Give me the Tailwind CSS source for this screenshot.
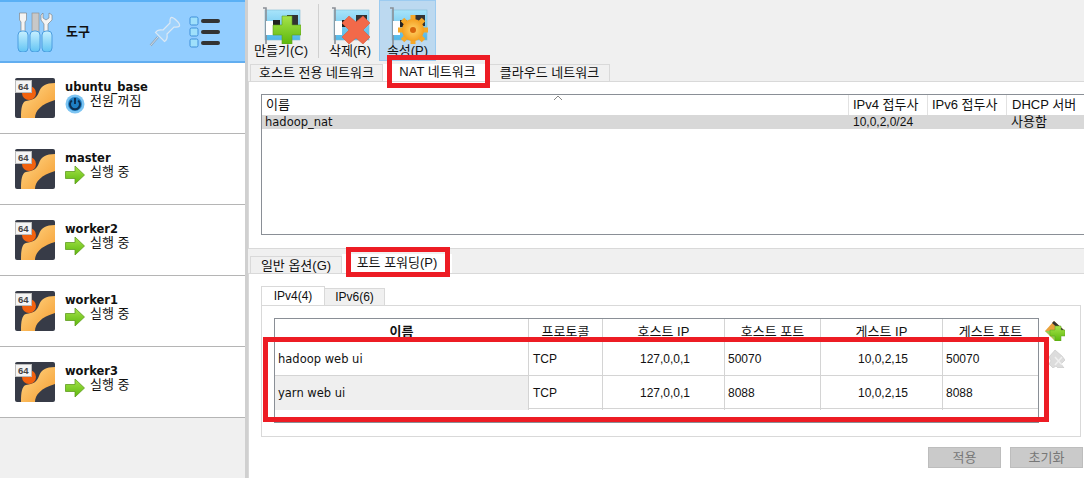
<!DOCTYPE html>
<html lang="ko">

<head>
  <meta charset="UTF-8">
  <meta name="viewport" content="width=device-width, initial-scale=1.0">
  <script src="https://cdn.jsdelivr.net/npm/@tailwindcss/browser@4"></script>
  <title>VirtualBox 네트워크 도구</title>
</head>

<body class="bg-white font-['Liberation_Sans','Noto_Sans_CJK_KR',sans-serif] text-[12px] text-[#111]">

  <!-- shared icons -->
  <svg class="absolute h-0 w-0" width="0" height="0">
    <defs>
      <linearGradient id="swoosh" x1="0" y1="0" x2="1" y2="1">
        <stop offset="0" stop-color="#ffd98a" />
        <stop offset="1" stop-color="#f59a2c" />
      </linearGradient>
      <linearGradient id="handle" x1="0" y1="0" x2="0" y2="1">
        <stop offset="0" stop-color="#c8f0ff" />
        <stop offset="1" stop-color="#62c4f4" />
      </linearGradient>
      <linearGradient id="card" x1="0" y1="0" x2="0" y2="1">
        <stop offset="0" stop-color="#a8e4fa" />
        <stop offset="1" stop-color="#4fb6e8" />
      </linearGradient>
      <linearGradient id="green" x1="0" y1="0" x2="0" y2="1">
        <stop offset="0" stop-color="#a6e34a" />
        <stop offset="1" stop-color="#5cb80c" />
      </linearGradient>
      <radialGradient id="gearfill">
        <stop offset="0" stop-color="#ffd36a" />
        <stop offset="1" stop-color="#f5a020" />
      </radialGradient>
      <symbol id="vm" viewBox="0 0 40 40">
        <rect width="40" height="40" rx="2" fill="#373b47" />
        <path d="M40 5C31 5 26 8 24 14C22 20 18 22 11 23C7 24 6 30 6 40L20 40C20 33 26 26 40 22Z" fill="url(#swoosh)" />
        <circle cx="14" cy="15" r="7" fill="#f2620f" />
        <rect x="0.5" y="2.5" width="16" height="12" fill="#f4f4f4" stroke="#bbb" />
        <text x="3" y="12" font-size="9.5" font-weight="700" fill="#444" font-family="Liberation Sans">64</text>
      </symbol>
      <symbol id="run" viewBox="0 0 20 20">
        <path d="M0.5 6.5H10V1L19.5 10L10 19V13.5H0.5Z" fill="url(#green)" stroke="#5f9c20" stroke-width="0.8" />
      </symbol>
      <symbol id="nic" viewBox="0 0 40 40">
        <rect x="4" y="6" width="35" height="30" fill="url(#card)" stroke="#7fbcd8" stroke-width="0.6" />
        <path d="M2 4H5V40" fill="none" stroke="#8a8f96" stroke-width="1.6" />
        <rect x="5" y="17" width="7" height="14" fill="#fff" />
        <rect x="12" y="16" width="7" height="7" fill="#222" />
        <rect x="26" y="11" width="11" height="11" fill="#333" />
      </symbol>
    </defs>
  </svg>

  <div class="relative flex h-[478px] w-[1084px] overflow-hidden">

    <!-- machine list -->
    <aside class="flex w-[248px] shrink-0 flex-col border-r-[3px] border-[#d0d0d0] bg-[#f0f0f0]">
      <div class="flex h-[63px] shrink-0 items-center border-t-2 border-b-2 border-t-[#5ab0f5] border-b-[#62aef0] bg-[#92cdff] pl-[17px]">
        <svg class="h-[40px] w-[36px]" viewBox="0 0 36 40">
          <path d="M2.5 1H9.5V8L8 10V20H4V10L2.5 8Z" fill="#f4f4f4" stroke="#777" stroke-width="0.6" />
          <rect x="15" y="1" width="7" height="20" fill="#c8c8c8" stroke="#888" stroke-width="0.6" />
          <path d="M26 1V6L29 8L32 6V1L35 3V8L31 12V21H27V12L24 8V3Z" fill="#f4f4f4" stroke="#777" stroke-width="0.6" />
          <rect x="1" y="19" width="10" height="21" rx="4" fill="url(#handle)" stroke="#4c9ee0" />
          <rect x="13" y="19" width="10" height="21" rx="4" fill="url(#handle)" stroke="#4c9ee0" />
          <rect x="25" y="19" width="10" height="21" rx="4" fill="url(#handle)" stroke="#4c9ee0" />
        </svg>
        <span class="ml-[13px] w-[26px] text-[13px] font-bold">도구</span>
        <svg class="ml-[57px] h-[32px] w-[32px]" viewBox="0 0 32 32" fill="none" stroke="#dbe8f4" stroke-width="1.2">
          <path d="M22 1.5C24 1 26 3 28 5C30 7 31 8.500 30.500 10C29 11.500 27 11 25 11L18 18C18.500 21 18 24 15.500 25.500L6.500 16.500C8 14 11 13.500 14 14L21 7C21 5 20.500 3 22 1.500Z" fill="#9fd2fc" />
          <path d="M9 21L1.500 29.500" stroke="#8fa7bd" stroke-width="2.400" />
          <path d="M9 21L1.500 29.500" stroke-width="0.800" />
        </svg>
        <svg class="ml-[8px] h-[32px] w-[32px]" viewBox="0 0 32 32">
          <rect x="1" y="1" width="8" height="8" rx="1.500" fill="#9fe0fb" stroke="#3f8fd8" />
          <rect x="1" y="12" width="8" height="8" rx="1.500" fill="#9fe0fb" stroke="#3f8fd8" />
          <rect x="1" y="23" width="8" height="8" rx="1.500" fill="#9fe0fb" stroke="#3f8fd8" />
          <rect x="12" y="3" width="19" height="4" rx="2" fill="#333" />
          <rect x="12" y="14" width="19" height="4" rx="2" fill="#333" />
          <rect x="12" y="25" width="19" height="4" rx="2" fill="#333" />
        </svg>
      </div>

      <div class="flex h-[71px] shrink-0 border-b border-[#b5b5b5] bg-white pl-[15px] pt-[15px]">
        <svg class="h-[40px] w-[40px]"><use href="#vm" /></svg>
        <div class="ml-[10px] pt-[2px]">
          <div class="h-[14px] font-['DejaVu_Sans','Noto_Sans_CJK_KR',sans-serif] text-[11.5px] font-bold leading-[14px]">ubuntu_base</div>
          <div class="flex items-start">
            <svg class="h-[20px] w-[20px]" viewBox="0 0 20 20">
              <circle cx="10" cy="10" r="9.500" fill="#7cc4f2" />
              <circle cx="10" cy="10" r="7" fill="#1f7fc4" />
              <path d="M6.800 6.500A5 5 0 1 0 13.200 6.500M10 4V10" fill="none" stroke="#0d2f52" stroke-width="2" />
            </svg>
            <span class="ml-[5px] text-[13px] leading-[14px]">전원 꺼짐</span>
          </div>
        </div>
      </div>
      <div class="flex h-[71px] shrink-0 border-b border-[#b5b5b5] bg-white pl-[15px] pt-[15px]">
        <svg class="h-[40px] w-[40px]"><use href="#vm" /></svg>
        <div class="ml-[10px] pt-[2px]">
          <div class="h-[14px] font-['DejaVu_Sans','Noto_Sans_CJK_KR',sans-serif] text-[11.5px] font-bold leading-[14px]">master</div>
          <div class="flex items-start">
            <svg class="h-[20px] w-[20px]"><use href="#run" /></svg>
            <span class="ml-[5px] text-[13px] leading-[14px]">실행 중</span>
          </div>
        </div>
      </div>
      <div class="flex h-[71px] shrink-0 border-b border-[#b5b5b5] bg-white pl-[15px] pt-[15px]">
        <svg class="h-[40px] w-[40px]"><use href="#vm" /></svg>
        <div class="ml-[10px] pt-[2px]">
          <div class="h-[14px] font-['DejaVu_Sans','Noto_Sans_CJK_KR',sans-serif] text-[11.5px] font-bold leading-[14px]">worker2</div>
          <div class="flex items-start">
            <svg class="h-[20px] w-[20px]"><use href="#run" /></svg>
            <span class="ml-[5px] text-[13px] leading-[14px]">실행 중</span>
          </div>
        </div>
      </div>
      <div class="flex h-[71px] shrink-0 border-b border-[#b5b5b5] bg-white pl-[15px] pt-[15px]">
        <svg class="h-[40px] w-[40px]"><use href="#vm" /></svg>
        <div class="ml-[10px] pt-[2px]">
          <div class="h-[14px] font-['DejaVu_Sans','Noto_Sans_CJK_KR',sans-serif] text-[11.5px] font-bold leading-[14px]">worker1</div>
          <div class="flex items-start">
            <svg class="h-[20px] w-[20px]"><use href="#run" /></svg>
            <span class="ml-[5px] text-[13px] leading-[14px]">실행 중</span>
          </div>
        </div>
      </div>
      <div class="flex h-[71px] shrink-0 border-b border-[#b5b5b5] bg-white pl-[15px] pt-[15px]">
        <svg class="h-[40px] w-[40px]"><use href="#vm" /></svg>
        <div class="ml-[10px] pt-[2px]">
          <div class="h-[14px] font-['DejaVu_Sans','Noto_Sans_CJK_KR',sans-serif] text-[11.5px] font-bold leading-[14px]">worker3</div>
          <div class="flex items-start">
            <svg class="h-[20px] w-[20px]"><use href="#run" /></svg>
            <span class="ml-[5px] text-[13px] leading-[14px]">실행 중</span>
          </div>
        </div>
      </div>
    </aside>

    <!-- network manager -->
    <main class="flex min-w-0 flex-1 flex-col bg-[#f0f0f0]">
      <div class="flex h-[62px] pl-[3px] text-[13px]">
        <div class="flex w-[60px] flex-col items-center pt-[4px]">
          <svg class="h-[40px] w-[40px]" viewBox="0 0 40 40">
            <use href="#nic" />
            <path d="M21 12H31V21H40V31H31V40H21V31H12V21H21Z" fill="url(#green)" stroke="#5f9c20" stroke-width="0.6" />
          </svg>
          <span class="leading-[14px]">만들기(C)</span>
        </div>
        <div class="ml-[7px] mr-[4px] mt-[4px] h-[54px] w-px bg-[#d0d0d0]"></div>
        <div class="flex w-[54px] flex-col items-center pt-[4px]">
          <svg class="h-[40px] w-[40px]" viewBox="0 0 40 40">
            <use href="#nic" />
            <path d="M19 12L26 18L33 12L40 19L33 26L40 33L33 40L26 34L19 40L12 33L19 26L12 19Z" fill="#f2694a" stroke="#d85a3a" stroke-width="0.6" />
          </svg>
          <span class="leading-[14px]">삭제(R)</span>
        </div>
        <div class="ml-[2px] flex h-[61px] w-[57px] flex-col items-center border border-[#9ccbf0] bg-[#bcd9f0] pt-[3px]">
          <svg class="h-[40px] w-[40px]" viewBox="0 0 40 40">
            <use href="#nic" />
            <path d="M25 11V41M10 26H40M14.5 15.5L35.5 36.5M35.5 15.5L14.5 36.5" stroke="#f5a828" stroke-width="5" />
            <circle cx="25" cy="26" r="11" fill="url(#gearfill)" />
            <circle cx="25" cy="26" r="3" fill="#d8660c" />
          </svg>
          <span class="leading-[14px]">속성(P)</span>
        </div>
      </div>

      <div class="mt-[2px] flex h-[17px] pl-[2px] text-[13px] leading-[16px]">
        <div class="w-[133px] border border-b-0 border-[#d9d9d9] text-center">호스트 전용 네트워크</div>
        <div class="w-[106px] bg-white pl-[3px] text-center">NAT 네트워크</div>
        <div class="w-[121px] border border-b-0 border-[#d9d9d9] text-center">클라우드 네트워크</div>
      </div>

      <section class="h-[168px] border-y border-l border-[#d9d9d9] bg-white pl-[12px] pt-[12px]">
        <div class="h-[141px] border border-r-0 border-[#8a8f96]">
          <div class="relative grid h-[20px] grid-cols-[587px_79px_79px_1fr] text-[13px] leading-[19px]">
            <div class="border-r border-[#e2e2e2] pl-[4px]">이름</div>
            <div class="border-r border-[#e2e2e2] pl-[4px]">IPv4 접두사</div>
            <div class="border-r border-[#e2e2e2] pl-[4px]">IPv6 접두사</div>
            <div class="pl-[5px]">DHCP 서버</div>
            <svg class="absolute left-[291px] top-0 h-[5px] w-[10px]" viewBox="0 0 10 5" fill="none" stroke="#888"><path d="M1 5L5 1L9 5" /></svg>
          </div>
          <div class="grid h-[14px] grid-cols-[587px_79px_79px_1fr] bg-[#d8d8d8] leading-[14px]">
            <div class="pl-[3px] font-['DejaVu_Sans',sans-serif] text-[11.5px]">hadoop_nat</div>
            <div class="pl-[4px]">10,0,2,0/24</div>
            <div></div>
            <div class="pl-[4px] text-[13px]">사용함</div>
          </div>
        </div>
      </section>

      <div class="flex h-[24px] items-end pl-[2px] text-[13px]">
        <div class="h-[17px] w-[92px] border border-b-0 border-[#d9d9d9] text-center leading-[17px]">일반 옵션(G)</div>
        <div class="h-[19px] w-[110px] bg-white text-center leading-[18px]">포트 포워딩(P)</div>
      </div>

      <section class="flex-1 border-t border-l border-[#d9d9d9] bg-white pl-[12px] pt-[12px]">
        <div class="flex h-[19px] items-end">
          <div class="h-[19px] w-[64px] border border-b-0 border-[#d9d9d9] text-center leading-[18px]">IPv4(4)</div>
          <div class="h-[17px] w-[60px] border-y border-r border-b-0 border-[#d9d9d9] bg-[#f0f0f0] text-center leading-[16px]">IPv6(6)</div>
        </div>
        <div class="flex h-[132px] w-[820px] border border-[#d9d9d9] pl-[12px] pt-[12px]">
          <div class="h-[105px] w-[765px] border border-[#8a8f96]">
            <div class="grid h-[23px] grid-cols-[254px_74px_122px_96px_122px_95px] text-center text-[13px] leading-[26px]">
              <div class="border-r border-[#d4d4d4] font-bold">이름</div>
              <div class="border-r border-[#d4d4d4]">프로토콜</div>
              <div class="border-r border-[#d4d4d4]">호스트 IP</div>
              <div class="border-r border-[#d4d4d4]">호스트 포트</div>
              <div class="border-r border-[#d4d4d4]">게스트 IP</div>
              <div>게스트 포트</div>
            </div>
            <div class="grid h-[34px] grid-cols-[254px_74px_122px_96px_122px_95px] border-b border-[#d4d4d4] leading-[35px]">
              <div class="border-r border-[#d4d4d4] pl-[3px] font-['DejaVu_Sans',sans-serif] text-[11.5px]">hadoop web ui</div>
              <div class="border-r border-[#d4d4d4] pl-[4px]">TCP</div>
              <div class="border-r border-[#d4d4d4] pl-[37px]">127,0,0,1</div>
              <div class="border-r border-[#d4d4d4] pl-[3px]">50070</div>
              <div class="border-r border-[#d4d4d4] pl-[37px]">10,0,2,15</div>
              <div class="pl-[3px]">50070</div>
            </div>
            <div class="grid h-[33px] grid-cols-[254px_74px_122px_96px_122px_95px] border-b border-[#d4d4d4] leading-[34px]">
              <div class="border-r border-[#d4d4d4] bg-[#efefef] pl-[3px] font-['DejaVu_Sans',sans-serif] text-[11.5px]">yarn web ui</div>
              <div class="border-r border-[#d4d4d4] pl-[4px]">TCP</div>
              <div class="border-r border-[#d4d4d4] pl-[37px]">127,0,0,1</div>
              <div class="border-r border-[#d4d4d4] pl-[3px]">8088</div>
              <div class="border-r border-[#d4d4d4] pl-[37px]">10,0,2,15</div>
              <div class="pl-[3px]">8088</div>
            </div>
          </div>
          <div class="ml-[6px] flex flex-col items-center gap-[7px] pt-[3px]">
            <svg class="h-[20px] w-[20px]" viewBox="0 0 20 20">
              <path d="M0 10L9 0L20 10L10 20Z" fill="#e9a23c" />
              <path d="M0 10L6 15L10 20L14 10Z" fill="#8fcf52" />
              <path d="M7 2L9 0L20 10L18 12Z" fill="#333" />
              <path d="M10 5H16V9H20V15H16V20H10V15H5V9H10Z" fill="url(#green)" stroke="#5f9c20" stroke-width="0.5" />
            </svg>
            <svg class="h-[20px] w-[20px]" viewBox="0 0 20 20">
              <path d="M4 9L10 2L17 8L20 12L16 16L19 20H13L11 18L8 20L4 16L6 13Z" fill="#dcdcdc" stroke="#c4c4c4" stroke-width="0.6" />
              <path d="M10 9L17 17M17 9L10 17" stroke="#f0f0f0" stroke-width="1.500" />
            </svg>
          </div>
        </div>
        <div class="mt-[10px] flex justify-end gap-[9px] pr-px text-[13px]">
          <div class="h-[21px] w-[73px] border border-[#bdbdbd] bg-[#cacaca] text-center leading-[19px] text-[#777]">적용</div>
          <div class="h-[21px] w-[73px] border border-[#bdbdbd] bg-[#cacaca] text-center leading-[19px] text-[#777]">초기화</div>
        </div>
      </section>
    </main>

    <!-- red annotation boxes drawn over the screenshot -->
    <div class="absolute left-[387px] top-[55px] h-[33px] w-[103px] border-[5px] border-[#ed1c24]"></div>
    <div class="absolute left-[346px] top-[247px] h-[30px] w-[104px] border-[5px] border-[#ed1c24]"></div>
    <div class="absolute left-[263px] top-[337px] h-[85px] w-[786px] border-[5px] border-[#ed1c24]"></div>
  </div>
</body>

</html>
